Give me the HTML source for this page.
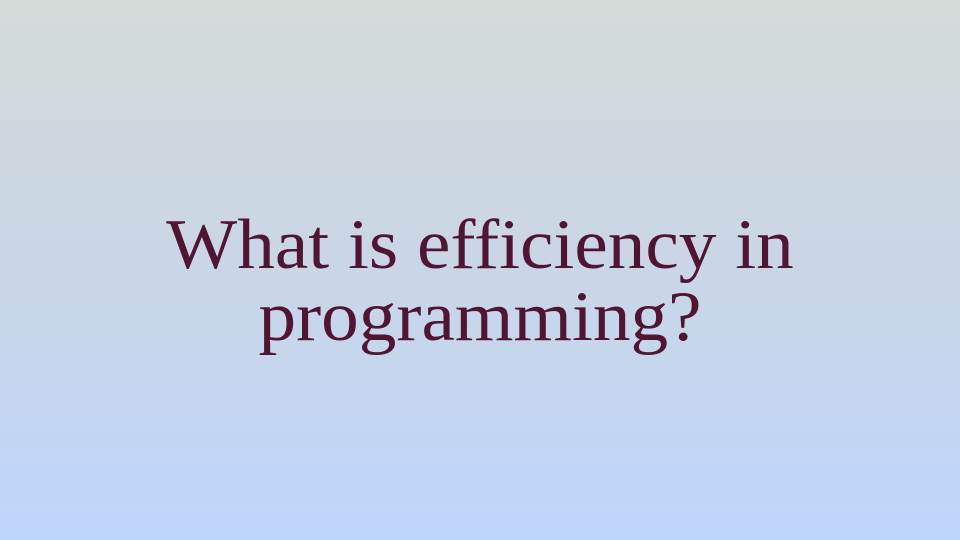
<!DOCTYPE html>
<html><head><meta charset="utf-8"><style>
html,body{margin:0;padding:0}
body{width:960px;height:540px;overflow:hidden;background:linear-gradient(to bottom,#d5dbd8 0%,#c9d6e6 50%,#bed6fc 100%);position:relative}
.t{position:absolute;left:0;width:960px;text-align:center;font-family:"Liberation Serif",serif;font-size:71px;color:#501533;line-height:72px;top:209px;transform:scaleX(1.06);transform-origin:480px 0}
</style></head><body>
<div class="t">What is efficiency in<br>programming?</div>
</body></html>
